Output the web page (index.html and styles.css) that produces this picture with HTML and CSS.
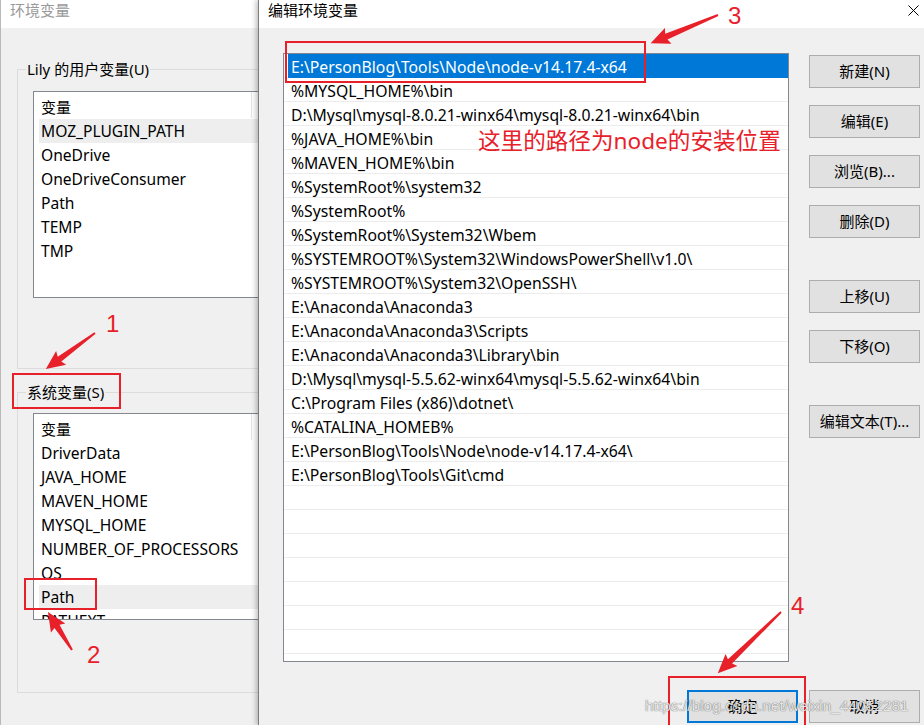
FILE: index.html
```html
<!DOCTYPE html>
<html lang="zh-CN">
<head>
<meta charset="utf-8">
<title>编辑环境变量</title>
<link rel="stylesheet" href="styles.css">
</head>
<body>
<div class="desktop">
  <section class="win win-back">
    <header class="titlebar"><span class="title muted">环境变量</span></header>
    <div class="back-body">
      <fieldset class="group group-user">
        <legend>Lily 的用户变量(U)</legend>
        <div class="varlist">
          <div class="varhead"><span class="varhead-cell">变量</span></div>
          <div class="varrow sel">MOZ_PLUGIN_PATH</div>
          <div class="varrow">OneDrive</div>
          <div class="varrow">OneDriveConsumer</div>
          <div class="varrow">Path</div>
          <div class="varrow">TEMP</div>
          <div class="varrow">TMP</div>
        </div>
      </fieldset>
      <fieldset class="group group-sys">
        <legend>系统变量(S)</legend>
        <div class="varlist">
          <div class="varhead"><span class="varhead-cell">变量</span></div>
          <div class="varrow">DriverData</div>
          <div class="varrow">JAVA_HOME</div>
          <div class="varrow">MAVEN_HOME</div>
          <div class="varrow">MYSQL_HOME</div>
          <div class="varrow">NUMBER_OF_PROCESSORS</div>
          <div class="varrow">OS</div>
          <div class="varrow sel">Path</div>
          <div class="varrow">PATHEXT</div>
        </div>
      </fieldset>
    </div>
  </section>

  <section class="win win-front">
    <header class="titlebar">
      <span class="title">编辑环境变量</span>
      <span class="closebtn">
        <svg width="11" height="11" viewBox="0 0 11 11"><path d="M0.5 0.5 L10.5 10.5 M10.5 0.5 L0.5 10.5" stroke="#000" stroke-width="1" fill="none"/></svg>
      </span>
    </header>
    <div class="front-body">
      <div class="front-main">
        <div class="pathlist">
          <div class="prow sel"><span class="cell">E:\PersonBlog\Tools\Node\node-v14.17.4-x64</span></div>
          <div class="prow"><span class="cell">%MYSQL_HOME%\bin</span></div>
          <div class="prow"><span class="cell">D:\Mysql\mysql-8.0.21-winx64\mysql-8.0.21-winx64\bin</span></div>
          <div class="prow"><span class="cell">%JAVA_HOME%\bin</span></div>
          <div class="prow"><span class="cell">%MAVEN_HOME%\bin</span></div>
          <div class="prow"><span class="cell">%SystemRoot%\system32</span></div>
          <div class="prow"><span class="cell">%SystemRoot%</span></div>
          <div class="prow"><span class="cell">%SystemRoot%\System32\Wbem</span></div>
          <div class="prow"><span class="cell">%SYSTEMROOT%\System32\WindowsPowerShell\v1.0\</span></div>
          <div class="prow"><span class="cell">%SYSTEMROOT%\System32\OpenSSH\</span></div>
          <div class="prow"><span class="cell">E:\Anaconda\Anaconda3</span></div>
          <div class="prow"><span class="cell">E:\Anaconda\Anaconda3\Scripts</span></div>
          <div class="prow"><span class="cell">E:\Anaconda\Anaconda3\Library\bin</span></div>
          <div class="prow"><span class="cell">D:\Mysql\mysql-5.5.62-winx64\mysql-5.5.62-winx64\bin</span></div>
          <div class="prow"><span class="cell">C:\Program Files (x86)\dotnet\</span></div>
          <div class="prow"><span class="cell">%CATALINA_HOMEB%</span></div>
          <div class="prow"><span class="cell">E:\PersonBlog\Tools\Node\node-v14.17.4-x64\</span></div>
          <div class="prow"><span class="cell">E:\PersonBlog\Tools\Git\cmd</span></div>
          <div class="prow"><span class="cell"></span></div>
          <div class="prow"><span class="cell"></span></div>
          <div class="prow"><span class="cell"></span></div>
          <div class="prow"><span class="cell"></span></div>
          <div class="prow"><span class="cell"></span></div>
          <div class="prow"><span class="cell"></span></div>
          <div class="prow"><span class="cell"></span></div>
          <div class="prow"><span class="cell"></span></div>
        </div>
        <div class="btncol">
          <button class="btn">新建(N)</button>
          <button class="btn">编辑(E)</button>
          <button class="btn">浏览(B)...</button>
          <button class="btn">删除(D)</button>
          <button class="btn spaced">上移(U)</button>
          <button class="btn">下移(O)</button>
          <button class="btn spaced">编辑文本(T)...</button>
        </div>
      </div>
      <div class="footer">
        <button class="btn primary">确定</button>
        <button class="btn">取消</button>
      </div>
    </div>
  </section>

  <div class="mark box-sys"></div>
  <div class="mark box-path"></div>
  <div class="mark box-first"></div>
  <div class="mark box-ok"></div>
  <div class="note">这里的路径为node的安装位置</div>
  <div class="num num1">1</div>
  <div class="num num2">2</div>
  <div class="num num3">3</div>
  <div class="num num4">4</div>
  <svg class="arrows" width="924" height="725" viewBox="0 0 924 725">
    <g fill="#e8202a">
      <polygon transform="translate(95 333) rotate(143.7)" points="0,-1 44,-3 42,-8.5 61,0 42,8.5 44,3 0,1"/>
      <polygon transform="translate(72 650) rotate(-122.3)" points="0,-1 28,-3 26,-8.5 45,0 26,8.5 28,3 0,1"/>
      <polygon transform="translate(718 15) rotate(157.3)" points="0,-1 56,-3 54,-8.5 73,0 54,8.5 56,3 0,1"/>
      <polygon transform="translate(781 612) rotate(135.9)" points="0,-1 71,-3 69,-8.5 88,0 69,8.5 71,3 0,1"/>
    </g>
  </svg>
  <div class="watermark">https://blog.csdn.net/weixin_44052281</div>
</div>
</body>
</html>
```

FILE: styles.css
```css
* { box-sizing: border-box; }

body {
  margin: 0;
  font-family: "Noto Sans", "Noto Sans CJK SC", sans-serif;
  font-size: 15px;
  color: #000;
}

.desktop {
  position: relative;
  width: 924px;
  height: 725px;
  overflow: hidden;
  background: #f0f0f0;
}

/* ---------- windows ---------- */
.win {
  position: absolute;
  top: 0;
  height: 725px;
  display: flex;
  flex-direction: column;
  background: #f0f0f0;
}

.titlebar {
  flex: none;
  height: 28px;
  background: #fff;
  display: flex;
  align-items: flex-start;
}

.title {
  padding-left: 9px;
  line-height: 20px;
  white-space: nowrap;
}

.muted { color: #9a9a9a; }

/* back window */
.win-back {
  left: 0;
  width: 300px;
  border-left: 1px solid #b9b9b9;
}

.back-body {
  padding: 31px 0 0 16px;
}

.group {
  margin: 0;
  padding: 0 0 70px 8px;
  border: 1px solid #dcdcdc;
  min-width: 0;
}

.group legend {
  padding: 0 1px;
  line-height: 20px;
  white-space: nowrap;
}

.group-sys {
  margin-top: 13px;
  padding-bottom: 72px;
}

.group-sys .varlist { margin-top: 11px; }

.varlist {
  margin: 12px 0 0 7px;
  height: 207px;
  border: 1px solid #828790;
  background: #fff;
  overflow: hidden;
}

.varhead {
  height: 27px;
  display: flex;
}

.varhead-cell {
  width: 218px;
  height: 26px;
  padding-left: 7px;
  padding-top: 2px;
  line-height: 26px;
  border-right: 1px solid #e5e5e5;
}

.varrow {
  height: 24px;
  line-height: 24px;
  margin-left: 5px;
  padding-left: 2px;
  font-size: 15.6px;
  white-space: nowrap;
}

.varrow.sel { background: #eeeeee; }

/* front window */
.win-front {
  left: 258px;
  width: 678px;
  border-left: 1px solid #7d7d7d;
  box-shadow: -2px 0 5px rgba(0, 0, 0, 0.25);
}

.closebtn {
  margin-left: auto;
  width: 46px;
  height: 21px;
  display: flex;
  align-items: center;
  justify-content: center;
}

.front-body {
  padding: 25px 16px 0 24px;
}

.front-main {
  display: flex;
  gap: 20px;
  align-items: flex-start;
}

.pathlist {
  width: 506px;
  height: 609px;
  border: 1px solid #828790;
  background: #fff;
  overflow: hidden;
  flex: none;
  font-size: 15.75px;
}

.prow {
  height: 24px;
  border-bottom: 1px solid #ececec;
}

.prow .cell {
  display: block;
  height: 23px;
  margin-left: 4px;
  padding-left: 3px;
  line-height: 26px;
  white-space: nowrap;
}

.prow.sel .cell {
  height: 24px;
  line-height: 26px;
  background: #0078d7;
  color: #fff;
}

.btncol {
  width: 111px;
  padding-top: 2px;
  display: flex;
  flex-direction: column;
  gap: 17px;
}

.btn {
  height: 33px;
  width: 111px;
  padding: 0 0 2px;
  border: 1px solid #adadad;
  background: #e1e1e1;
  font: inherit;
  color: #000;
  white-space: nowrap;
}

.btn.spaced { margin-top: 25px; }

.btn.primary { border: 2px solid #0078d7; }

.footer {
  margin-top: 28px;
  display: flex;
  justify-content: flex-end;
  gap: 11px;
}

/* ---------- annotations ---------- */
.mark {
  position: absolute;
  border: 2px solid #e8202a;
}

.box-sys { left: 12px; top: 373px; width: 109px; height: 36px; }
.box-path { left: 24px; top: 578px; width: 73px; height: 32px; }
.box-first { left: 285px; top: 41px; width: 361px; height: 42px; }
.box-ok { left: 668px; top: 676px; width: 138px; height: 52px; }

.note {
  position: absolute;
  left: 478px;
  top: 126px;
  font-size: 22.6px;
  line-height: 30px;
  color: #e8202a;
  white-space: nowrap;
}

.num {
  position: absolute;
  font-family: "Liberation Sans", sans-serif;
  font-size: 24px;
  line-height: 24px;
  color: #e8202a;
}

.num1 { left: 106px; top: 312px; }
.num2 { left: 87px; top: 643px; }
.num3 { left: 728px; top: 4px; }
.num4 { left: 791px; top: 594px; }

.arrows {
  position: absolute;
  left: 0;
  top: 0;
  pointer-events: none;
}

.watermark {
  position: absolute;
  left: 645px;
  top: 696px;
  font-family: "Liberation Sans", sans-serif;
  font-size: 15.5px;
  line-height: 20px;
  color: rgba(255, 255, 255, 0.85);
  text-shadow: 0 0 1px rgba(60, 60, 60, 0.6), 0 0 1px rgba(60, 60, 60, 0.6);
  white-space: nowrap;
  pointer-events: none;
}
```
